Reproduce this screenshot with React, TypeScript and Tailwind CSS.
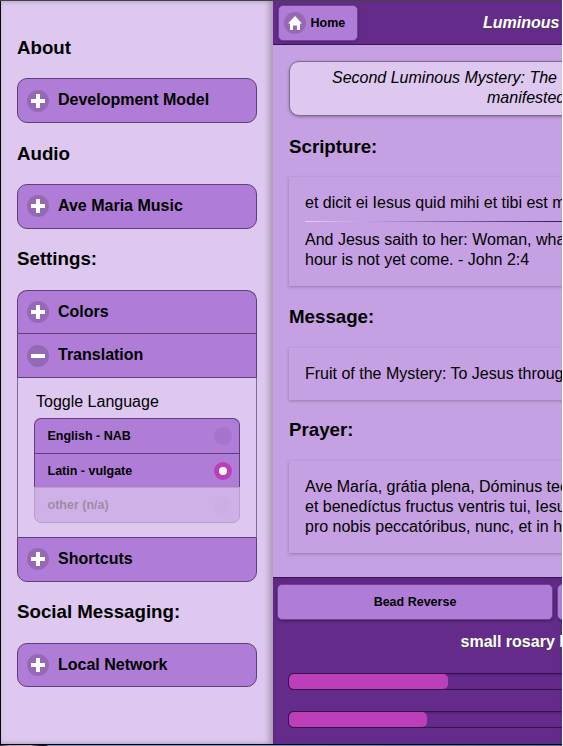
import React from "react";

function Badge({ kind }: { kind: "plus" | "minus" | "home" }) {
  return (
    <span className="flex size-[22px] shrink-0 items-center justify-center rounded-full bg-[#9669b6]">
      <svg width="14" height="14" viewBox="0 0 14 14" fill="#fff" shapeRendering={kind === "home" ? "auto" : "crispEdges"}>
        {kind === "plus" && <path d="M5 0h4v5h5v4H9v5H5V9H0V5h5z" />}
        {kind === "minus" && <path d="M0 5h14v4H0z" />}
        {kind === "home" && <path d="M7 0 0 7.500h2V14h3V9.500h4V14h3V7.500h2z" />}
      </svg>
    </span>
  );
}

function Title({ children, className = "" }: { children: React.ReactNode; className?: string }) {
  return <h3 className={`text-[18.720px] leading-6 font-bold ${className}`}>{children}</h3>;
}

type RowProps = { label: string; kind?: "plus" | "minus"; className?: string; labelClass?: string };

function Row({ label, kind = "plus", className = "", labelClass = "" }: RowProps) {
  return (
    <div className={`flex shrink-0 gap-[9px] border-[#5f3f78] bg-[#af7dd7] pl-[9px] font-bold ${className}`}>
      <Badge kind={kind} />
      <span className={`leading-5 ${labelClass}`}>{label}</span>
    </div>
  );
}

type OptionProps = { label: string; on?: boolean; className?: string; labelClass?: string };

function Option({ label, on = false, className = "", labelClass = "" }: OptionProps) {
  return (
    <div className={`flex shrink-0 items-center justify-between border-[#5f3f78] bg-[#af7dd7] pr-[7px] pl-[12.500px] text-[12.500px] font-bold ${className}`}>
      <span className={labelClass}>{label}</span>
      <span className={`flex size-[18px] items-center justify-center rounded-full ${on ? "bg-[#bd3eb9]" : "bg-[#a675cb]"}`}>
        {on && <span className="size-2 rounded-full bg-white" />}
      </span>
    </div>
  );
}

function Passage({ children, className = "" }: { children: React.ReactNode; className?: string }) {
  return (
    <div className={`shrink-0 bg-[#c5a0e2] px-4 leading-5 shadow-[0_1px_3px_rgba(0,0,0,0.25)] ${className}`}>{children}</div>
  );
}

function Meter({ value, className = "" }: { value: number; className?: string }) {
  return (
    <div className={`h-[17px] shrink-0 overflow-hidden rounded-[5px] border border-[#35134f] bg-[#642b8b] shadow-[inset_0_1px_3px_rgba(0,0,0,0.25)] ${className}`}>
      <div className="h-full rounded-[5px] bg-[#bd3eb9]" style={{ width: value }} />
    </div>
  );
}

export default function App() {
  return (
    <div className="h-[746px] w-[563px] overflow-hidden bg-white font-['Liberation_Sans',Arial,sans-serif] text-base text-black">
      <div className="flex h-[746px] w-[562px] flex-col overflow-hidden">
        <div className="h-px shrink-0 bg-[#444]" />
        <div className="flex h-[743px] shrink-0 border-l border-black">
          <aside className="flex w-[272px] shrink-0 flex-col bg-[#dec8ef] pr-4 pl-4 shadow-[inset_-5px_0_5px_rgba(0,0,0,0.18),inset_0_0_4px_rgba(0,0,0,0.1)]">
            <Title className="mt-[35px]">About</Title>
            <Row label="Development Model" className="mt-[18px] h-[45px] rounded-[10px] border pt-[11px]" />
            <Title className="mt-[19px]">Audio</Title>
            <Row label="Ave Maria Music" labelClass="pt-px" className="mt-[18px] h-[45px] rounded-[10px] border pt-[10px]" />
            <Title className="mt-[18px]">Settings:</Title>
            <div className="mt-[19px] flex h-[292px] shrink-0 flex-col">
              <Row label="Colors" labelClass="pt-px" className="h-[43px] rounded-t-[10px] border border-b-0 pt-[10px]" />
              <Row label="Translation" kind="minus" className="h-[45px] border pt-[11px]" />
              <div className="flex h-[159px] shrink-0 flex-col border-x border-[#806c92] px-4 pt-[14px]">
                <p className="pl-[2px] leading-5">Toggle Language</p>
                <div className="mt-[6px] flex w-[206px] flex-col">
                  <Option label="English - NAB" className="h-[35px] rounded-t-[7px] border border-b-0" />
                  <Option label="Latin - vulgate" labelClass="pt-px" on className="h-[34px] border border-b-0" />
                  <Option label="other (n/a)" className="h-9 rounded-b-[7px] border opacity-30" />
                </div>
              </div>
              <Row label="Shortcuts" labelClass="pt-px" className="h-[45px] rounded-b-[10px] border pt-[10px]" />
            </div>
            <Title className="mt-[18px]">Social Messaging:</Title>
            <Row label="Local Network" labelClass="pt-px" className="mt-[19px] h-[44px] rounded-[10px] border pt-[10px]" />
          </aside>

          <main className="flex w-[289px] flex-col overflow-hidden bg-[#c5a0e2]">
            <header className="flex h-11 shrink-0 items-start border-b border-[#351650] bg-[#642b8b] pt-1 pl-[5px]">
              <button className="flex h-9 w-20 shrink-0 items-center gap-1 rounded-[5px] border border-[#704392] bg-[#af7dd7] pl-[5px] text-[12.500px] font-bold shadow-[0_1px_3px_rgba(0,0,0,0.2)]">
                <Badge kind="home" />
                <span className="pl-[0.500px]">Home</span>
              </button>
              <h1 className="ml-[125px] pt-2 leading-5 font-bold whitespace-nowrap text-white italic [text-shadow:0_1px_0_#444]">Luminous Mysteries</h1>
            </header>

            <div className="flex h-[532px] shrink-0 flex-col pl-4">
              <div className="mt-4 h-[55px] w-[560px] shrink-0 rounded-[10px] border border-[#806c92] bg-[#dec8ef] pt-[6px] leading-5 italic shadow-[0_1px_3px_rgba(0,0,0,0.3)]">
                <p className="pl-[42px]">Second Luminous Mystery: The wedding feast at Cana,</p>
                <p className="pl-[197px]">manifested in glory</p>
              </div>
              <Title className="mt-[19px]">Scripture:</Title>
              <Passage className="mt-[18px] h-[109px] w-[560px] pt-4">
                <p>et dicit ei Iesus quid mihi et tibi est mulier</p>
                <hr className="my-2 h-px border-0 bg-[linear-gradient(to_right,#e6d0f7,#c5a0e2_11%,#35134f_50%,#c5a0e2)]" />
                <p>And Jesus saith to her: Woman, what is that to me</p>
                <p>hour is not yet come. - John 2:4</p>
              </Passage>
              <Title className="mt-[19px]">Message:</Title>
              <Passage className="mt-[19px] h-[52px] w-[560px] pt-4">
                <p>Fruit of the Mystery: To Jesus through Mary</p>
              </Passage>
              <Title className="mt-[18px]">Prayer:</Title>
              <Passage className="mt-[19px] h-[92px] w-[560px] pt-4">
                <p>Ave María, grátia plena, Dóminus tecum.</p>
                <p>et benedíctus fructus ventris tui, Iesus.</p>
                <p>pro nobis peccatóribus, nunc, et in hora</p>
              </Passage>
            </div>

            <footer className="flex h-[167px] shrink-0 flex-col border-t border-[#351650] bg-[#642b8b] shadow-[inset_0_2px_4px_rgba(0,0,0,0.12)]">
              <div className="mt-[6px] flex shrink-0 gap-1 pl-1">
                <button className="h-9 w-[276px] shrink-0 rounded-[5px] border border-[#704392] bg-[#af7dd7] text-[12.500px] font-bold shadow-[0_1px_3px_rgba(0,0,0,0.4)]">Bead Reverse</button>
                <button className="h-9 w-[276px] shrink-0 rounded-[5px] border border-[#704392] bg-[#af7dd7] text-[12.500px] font-bold shadow-[0_1px_3px_rgba(0,0,0,0.4)]">Bead Forward</button>
              </div>
              <p className="mt-3 shrink-0 pl-[187.500px] leading-5 font-bold whitespace-nowrap text-white [text-shadow:0_1px_0_#444]">small rosary bead</p>
              <Meter value={159} className="mt-[21px] ml-[15px] w-[560px]" />
              <Meter value={138} className="mt-[21px] ml-[15px] w-[560px]" />
            </footer>
          </main>
        </div>
        <div className="h-px shrink-0 bg-black" />
        <div className="h-px shrink-0 bg-[linear-gradient(to_right,#2a2440_0,#b79bc0_10px,#c9a8b8_30px,#15103a_40px,#15103a_46px,#6f97cf_48px,#6f97cf_270px,#48759f_100%)]" />
      </div>
    </div>
  );
}
